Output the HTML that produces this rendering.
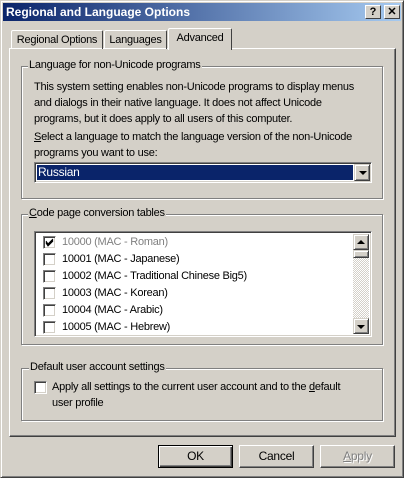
<!DOCTYPE html>
<html><head><style>
*{margin:0;padding:0;box-sizing:border-box}
body{width:404px;height:478px;background:#d4d0c8;font-family:"Liberation Sans",sans-serif;font-size:11px;letter-spacing:-0.25px;color:#000;position:relative;overflow:hidden}
.a{position:absolute;white-space:nowrap}
.win{left:0;top:0;width:404px;height:478px;border:1px solid;border-color:#d4d0c8 #404040 #404040 #d4d0c8;box-shadow:inset 1px 1px #fff,inset -1px -1px #808080}
.title{left:3px;top:3px;width:398px;height:18px;background:linear-gradient(90deg,#0a246a,#a6caf0);color:#fff;font-weight:bold;font-size:12px;line-height:18px;padding-left:3px;letter-spacing:0}
.tb{top:5px;width:16px;height:14px;background:#d4d0c8;border:1px solid;border-color:#fff #404040 #404040 #fff;font-weight:bold;font-size:11px;text-align:center;line-height:12px;color:#000;letter-spacing:0}
.tab{height:20px;border:1px solid;border-color:#fff #404040 transparent #fff;border-bottom:none;border-radius:2px 2px 0 0;padding:3px 0;text-align:center}
.panel{left:9px;top:48px;width:387px;height:389px;border:1px solid;border-color:#fff #404040 #404040 #fff;box-shadow:inset -1px -1px #808080}
.grp{border:1px solid #808080;box-shadow:inset 1px 1px #fff,1px 1px #fff}
.lbl{background:#d4d0c8;padding:0 1px}
.sunk{border:1px solid;border-color:#808080 #fff #fff #808080;box-shadow:inset 1px 1px #404040,inset -1px -1px #d4d0c8;background:#fff}
.cb{width:13px;height:13px;border:1px solid;border-color:#808080 #fff #fff #808080;box-shadow:inset 1px 1px #404040,inset -1px -1px #d4d0c8;background:#fff}
.btn{top:445px;width:75px;height:23px;border:1px solid;border-color:#fff #404040 #404040 #fff;box-shadow:inset -1px -1px #808080;text-align:center;line-height:21px;font-size:12px}
.sbtn{width:16px;height:16px;background:#d4d0c8;border:1px solid;border-color:#d4d0c8 #404040 #404040 #d4d0c8;box-shadow:inset 1px 1px #fff,inset -1px -1px #808080}
.row{left:8px;height:17px;line-height:17px}
.row .cb{position:absolute;left:0;top:2px}
.row span{position:absolute;left:19px;top:0;white-space:nowrap}
u{text-decoration:underline}
</style></head><body>
<div class="a win"></div>
<div class="a title">Regional and Language Options</div>
<div class="a tb" style="left:365px">?</div>
<div class="a tb" style="left:384px">✕</div>

<div class="a panel"></div>
<div class="a tab" style="left:11px;top:30px;width:92px;height:19px">Regional Options</div>
<div class="a tab" style="left:104px;top:30px;width:63px;height:19px">Languages</div>
<div class="a tab" style="left:168px;top:28px;width:64px;height:22px;background:#d4d0c8;padding-top:3px">Advanced</div>

<div class="a grp" style="left:21px;top:66px;width:362px;height:133px"></div>
<div class="a lbl" style="left:28px;top:59px">Language for non-Unicode programs</div>
<div class="a" style="left:34px;top:79px;line-height:16px">This system setting enables non-Unicode programs to display menus<br>and dialogs in their native language. It does not affect Unicode<br>programs, but it does apply to all users of this computer.</div>
<div class="a" style="left:34px;top:129px;line-height:16px"><u>S</u>elect a language to match the language version of the non-Unicode<br>programs you want to use:</div>
<div class="a sunk" style="left:34px;top:162px;width:338px;height:21px"></div>
<div class="a" style="left:37px;top:165px;width:316px;height:15px;background:#0a246a;color:#fff;line-height:15px;padding-left:1px;font-size:12px">Russian</div>
<div class="a sbtn" style="left:354px;top:164px;height:17px"><div class="a" style="left:4px;top:6px;border:4px solid transparent;border-top:4px solid #000;border-bottom:none;width:0;height:0"></div></div>

<div class="a grp" style="left:21px;top:214px;width:362px;height:131px"></div>
<div class="a lbl" style="left:28px;top:207px"><u>C</u>ode page conversion tables</div>
<div class="a sunk" style="left:34px;top:231px;width:338px;height:106px;overflow:hidden">
  <div class="a row" style="top:2px"><div class="cb"><svg width="11" height="11" style="position:absolute;left:0;top:0"><path d="M2 4 L4 7 L9 2 M2 5 L4 8 L9 3 M2 6 L4 9 L9 4" stroke="#000" fill="none"/></svg></div><span style="color:#808080">10000 (MAC - Roman)</span></div>
  <div class="a row" style="top:19px"><div class="cb"></div><span>10001 (MAC - Japanese)</span></div>
  <div class="a row" style="top:36px"><div class="cb"></div><span>10002 (MAC - Traditional Chinese Big5)</span></div>
  <div class="a row" style="top:53px"><div class="cb"></div><span>10003 (MAC - Korean)</span></div>
  <div class="a row" style="top:70px"><div class="cb"></div><span>10004 (MAC - Arabic)</span></div>
  <div class="a row" style="top:87px"><div class="cb"></div><span>10005 (MAC - Hebrew)</span></div>
  <div class="a" style="left:318px;top:2px;width:16px;height:100px;background:repeating-conic-gradient(#fff 0 25%,#d4d0c8 0 50%) 0 0/2px 2px"></div>
  <div class="a sbtn" style="left:318px;top:2px"><div class="a" style="left:3px;top:5px;border:4px solid transparent;border-bottom:4px solid #000;border-top:none;width:0;height:0"></div></div>
  <div class="a sbtn" style="left:318px;top:18px;height:8px"></div>
  <div class="a sbtn" style="left:318px;top:86px"><div class="a" style="left:3px;top:6px;border:4px solid transparent;border-top:4px solid #000;border-bottom:none;width:0;height:0"></div></div>
</div>

<div class="a grp" style="left:21px;top:368px;width:362px;height:53px"></div>
<div class="a lbl" style="left:29px;top:361px">Default user account settings</div>
<div class="a cb" style="left:34px;top:381px"></div>
<div class="a" style="left:52px;top:379px;line-height:16px">Apply all settings to the current user account and to the <u>d</u>efault<br>user profile</div>

<div class="a btn" style="left:158px;border-color:#000;box-shadow:inset 1px 1px #fff,inset -1px -1px #404040,inset -2px -2px #808080">OK</div>
<div class="a btn" style="left:239px">Cancel</div>
<div class="a btn" style="left:320px;color:#808080;text-shadow:1px 1px #fff"><u>A</u>pply</div>
</body></html>
